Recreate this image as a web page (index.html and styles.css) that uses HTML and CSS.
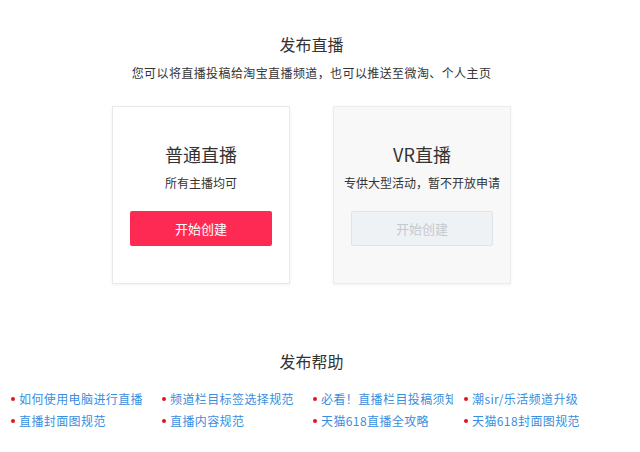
FILE: index.html
```html
<!DOCTYPE html>
<html>
<head>
    <title>发布直播</title>
    <link rel="stylesheet" href="styles.css">
</head>
<body>
    <div class="page">
        <h1 class="title">发布直播</h1>
        <p class="desc">您可以将直播投稿给淘宝直播频道，也可以推送至微淘、个人主页</p>

        <div class="cards">
            <div class="card">
                <h2>普通直播</h2>
                <p>所有主播均可</p>
                <button class="btn">开始创建</button>
            </div>
            <div class="card card-off">
                <h2>VR直播</h2>
                <p>专供大型活动，暂不开放申请</p>
                <button class="btn btn-off" disabled>开始创建</button>
            </div>
        </div>

        <h1 class="title help-title">发布帮助</h1>
        <ul class="links">
            <li><a href="#">如何使用电脑进行直播</a></li>
            <li><a href="#">频道栏目标签选择规范</a></li>
            <li><a href="#">必看！直播栏目投稿须知</a></li>
            <li><a href="#">潮sir/乐活频道升级</a></li>
            <li><a href="#">直播封面图规范</a></li>
            <li><a href="#">直播内容规范</a></li>
            <li><a href="#">天猫618直播全攻略</a></li>
            <li><a href="#">天猫618封面图规范</a></li>
        </ul>
    </div>
</body>
</html>
```

FILE: styles.css
```css
body {
    margin: 0;
    padding: 0;
    background-color: #fff;
    font-family: "Microsoft YaHei", "Noto Sans CJK SC", "Noto Sans", sans-serif;
    color: #333;
}
.page {
    width: 623px;
    padding-top: 33px;
}
.title {
    margin: 0;
    font-size: 16px;
    font-weight: normal;
    line-height: 22px;
    text-align: center;
    color: #333;
}
.desc {
    margin: 9px 0 0;
    font-size: 12px;
    line-height: 18px;
    letter-spacing: 0.4px;
    text-align: center;
    color: #333;
}
.cards {
    display: flex;
    justify-content: center;
    gap: 43px;
    margin-top: 24px;
}
.card {
    box-sizing: border-box;
    width: 178px;
    height: 178px;
    padding-top: 35px;
    border: 1px solid #e8e8e8;
    background-color: #fff;
    box-shadow: 0 1px 3px rgba(0, 0, 0, 0.06);
    text-align: center;
}
.card h2 {
    margin: 0;
    font-size: 18px;
    font-weight: normal;
    line-height: 24px;
    color: #333;
}
.card p {
    margin: 8px 0 0;
    font-size: 12px;
    line-height: 18px;
    color: #333;
}
.card-off {
    background-color: #f8f8f8;
    border-color: #ececec;
}
.btn {
    display: block;
    width: 142px;
    height: 35px;
    margin: 19px auto 0;
    border: none;
    border-radius: 2px;
    background-color: #ff2a53;
    color: #fff;
    font-family: inherit;
    font-size: 13px;
    cursor: pointer;
}
.btn-off {
    background-color: #eef2f5;
    border: 1px solid #e0e4e8;
    color: #c4c9cf;
    cursor: default;
}
.help-title {
    margin-top: 66px;
}
.links {
    display: grid;
    grid-template-columns: repeat(4, 151px);
    row-gap: 4px;
    margin: 18px 0 0;
    padding: 0 0 0 11px;
    list-style: none;
}
.links li {
    display: flex;
    align-items: center;
    font-size: 12px;
    line-height: 18px;
}
.links li::before {
    content: "";
    width: 4px;
    height: 4px;
    margin-right: 4px;
    border-radius: 50%;
    background-color: #e3141e;
    flex-shrink: 0;
}
.links a {
    max-width: 132px;
    overflow: hidden;
    white-space: nowrap;
    letter-spacing: 0.4px;
    color: #3a8ee0;
    text-decoration: none;
}
```
